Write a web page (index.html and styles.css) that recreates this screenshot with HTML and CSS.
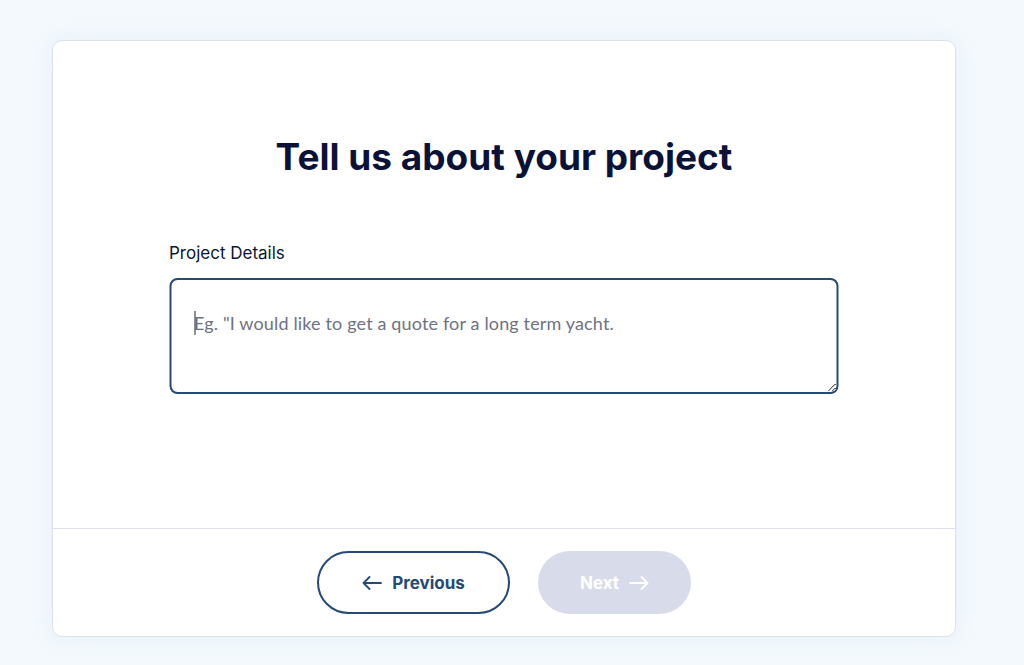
FILE: index.html
```html
<!DOCTYPE html>
<html lang="en">
<head>
<meta charset="utf-8">
<title>Tell us about your project</title>
<link rel="stylesheet" href="styles.css">
</head>
<body>
<div class="card">
  <div class="card-main">
    <h1 class="title">Tell us about your project</h1>
    <div class="field">
      <label class="label" for="details">Project Details</label>
      <div class="area-wrap">
        <textarea id="details" class="area" placeholder="Eg. &quot;I would like to get a quote for a long term yacht."></textarea>
        <span class="caret"></span>
      </div>
    </div>
  </div>
  <div class="card-footer">
    <button class="btn btn-prev" type="button">
      <svg class="arrow" width="20" height="14" viewBox="0 0 20 14" fill="none" stroke="currentColor" stroke-width="1.8" stroke-linecap="round" stroke-linejoin="round"><path d="M19 7H1.5M7.5 1L1.5 7l6 6"/></svg>
      <span>Previous</span>
    </button>
    <button class="btn btn-next" type="button" disabled>
      <span>Next</span>
      <svg class="arrow" width="20" height="14" viewBox="0 0 20 14" fill="none" stroke="currentColor" stroke-width="1.8" stroke-linecap="round" stroke-linejoin="round"><path d="M1 7h17.5M12.5 1l6 6-6 6"/></svg>
    </button>
  </div>
</div>
</body>
</html>
```

FILE: styles.css
```css
* { box-sizing: border-box; }
html, body { margin: 0; padding: 0; }
body {
  background: #f3f9fd;
  font-family: Inter, "Noto Sans", sans-serif;
  color: #0b1538;
  width: 1024px;
  height: 665px;
  overflow: hidden;
}
.card {
  margin: 40px 0 0 52px;
  width: 904px;
  height: 597px;
  background: #ffffff;
  border: 1px solid #dcdfee;
  border-radius: 10px;
  box-shadow: 0 0 24px rgba(190, 205, 230, 0.18);
  display: flex;
  flex-direction: column;
}
.card-main {
  flex: 1;
  padding-top: 94px;
}
.title {
  margin: 0;
  text-align: center;
  font-size: 37px;
  line-height: 44px;
  font-weight: 700;
  letter-spacing: 0;
  color: #0a1238;
}
.field {
  width: 669px;
  margin: 62px auto 0;
  transform: translateX(-0.5px);
}
.label {
  display: block;
  font-size: 17px;
  line-height: 24px;
  color: #0b1538;
  letter-spacing: 0;
}
.area-wrap {
  position: relative;
  margin-top: 13px;
}
.area {
  display: block;
  width: 669px;
  height: 116px;
  border: 2px solid #244a75;
  border-radius: 8px;
  padding: 30px 23px;
  font-family: Lato, Inter, sans-serif;
  font-size: 18px;
  line-height: 26px;
  letter-spacing: 0.15px;
  color: #0b1538;
  outline: none;
  resize: vertical;
  background: #fff;
}
.area::placeholder { color: #6e7283; }
.caret {
  position: absolute;
  left: 25px;
  top: 33px;
  width: 1.5px;
  height: 24px;
  background: #1a1f36;
}
.card-footer {
  height: 108px;
  border-top: 1px solid #dfe2ee;
  display: flex;
  justify-content: center;
  align-items: center;
  gap: 28px;
}
.btn {
  height: 63px;
  border-radius: 32px;
  font-family: Inter, "Noto Sans", sans-serif;
  font-size: 17px;
  font-weight: 700;
  display: flex;
  align-items: center;
  justify-content: center;
  gap: 10px;
  cursor: pointer;
  padding: 0;
}
.btn-prev {
  width: 193px;
  background: #fff;
  border: 2px solid #244a75;
  color: #244a75;
}
.btn-next {
  width: 153px;
  background: #d8dbea;
  border: none;
  color: #ffffff;
  cursor: default;
}
.arrow { display: block; }
```
